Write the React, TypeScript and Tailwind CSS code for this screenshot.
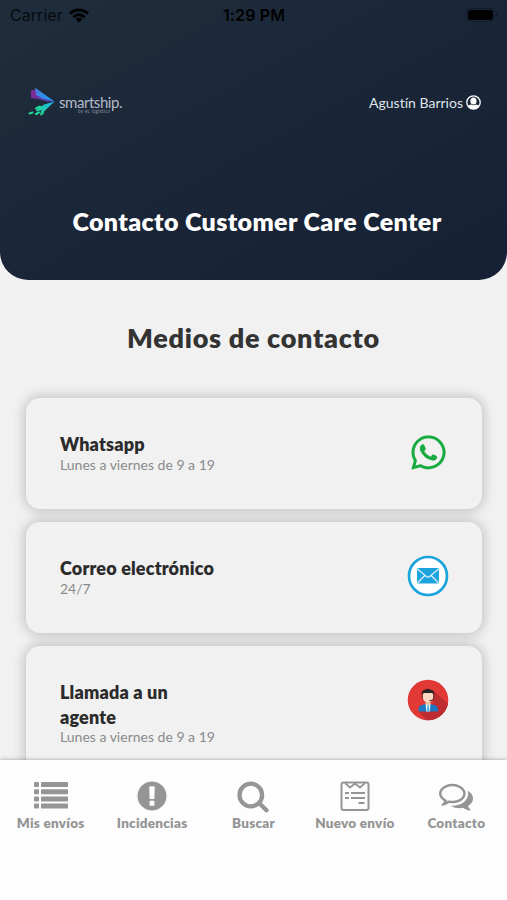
import type { ReactNode } from "react"
import { FaWhatsapp } from "react-icons/fa"

function StatusBar() {
  return (
    <div className="grid h-[30px] grid-cols-3 items-center pr-[10px] pl-[10px] font-['Inter'] text-black">
      <div className="flex items-center gap-[6px]">
        <span className="text-[16px] tracking-[0.05px] opacity-75">Carrier</span>
        <svg className="h-[15px] w-5" viewBox="0 0 20 15" fill="none" stroke="currentColor" strokeWidth="2.900">
          <path d="M1 5.700a12.800 12.800 0 0 1 18 0" />
          <path d="M4.300 9.200a8 8 0 0 1 11.400 0" />
          <path d="M10 14.500l-3.300-3.300a4.700 4.700 0 0 1 6.600 0z" fill="currentColor" stroke="none" />
        </svg>
      </div>
      <span className="pl-px text-center text-[16px] font-semibold tracking-[0.15px] whitespace-nowrap">1:29 PM</span>
      <div className="flex items-center justify-end gap-px pb-px">
        <div className="rounded-[4px] border border-black/30 p-px">
          <div className="h-[10px] w-[25px] rounded-[3px] bg-black" />
        </div>
        <div className="h-1 w-px rounded-r bg-black/40" />
      </div>
    </div>
  )
}

function Logo() {
  return (
    <div className="flex items-start">
      <svg className="h-[32px] w-[32px]" viewBox="0 0 32 32">
        <defs>
          <linearGradient id="wing" x1="0" y1="0" x2="1" y2="1">
            <stop offset="0" stopColor="#4b78d8" />
            <stop offset="1" stopColor="#1b9ff0" />
          </linearGradient>
          <linearGradient id="trail" x1="0" y1="1" x2="1" y2="0">
            <stop offset="0" stopColor="#1fe08f" />
            <stop offset="1" stopColor="#22a8ee" />
          </linearGradient>
        </defs>
        <path d="M4 4l5 0 10 10-15-2z" fill="#7a2c96" />
        <path d="M8 1.500L27.500 15.500 19 14.500 9 9z" fill="url(#wing)" />
        <path d="M4 10.500l16 3 7.500 2H20z" fill="#5a3fb4" />
        <path d="M27.500 15.500L16 26.500l-3 .5 2-3-5 1.500-1-1.500 8-5.500z" fill="url(#trail)" />
        <path d="M9 22.500l4-2M2.500 27.500l3-1M9 28l3-1.500M14 28.500l2-1.500" stroke="#1fd99a" strokeWidth="2" strokeLinecap="round" />
      </svg>
      <div className="flex flex-col pt-[8px]">
        <span className="h-[14px] text-[15px] leading-[16px] font-normal tracking-[-0.45px] whitespace-nowrap text-[#b3bac6]">smartship.</span>
        <span className="pl-[19px] text-[5px] leading-[6px] tracking-[0.1px] whitespace-nowrap text-[#7f8998]">by ec logistica</span>
      </div>
    </div>
  )
}

function MailIcon() {
  return (
    <svg className="size-[42px]" viewBox="0 0 42 42">
      <circle cx="21" cy="21" r="19" fill="#fff" stroke="#1ea4dc" strokeWidth="2.700" />
      <rect x="10" y="13" width="22" height="15.500" rx="1.500" fill="#1ea4dc" />
      <path d="M10.500 14l8.500 7.300q2 1.700 4 0l8.500-7.300M10.500 28l7.300-7.500M31.500 28l-7.300-7.500" fill="none" stroke="#dff2fb" strokeWidth="1.200" />
    </svg>
  )
}

function AgentIcon() {
  return (
    <svg className="size-[42px]" viewBox="0 0 42 42">
      <defs>
        <clipPath id="agent">
          <circle cx="21" cy="21" r="20.300" />
        </clipPath>
      </defs>
      <g clipPath="url(#agent)">
        <rect width="42" height="42" fill="#e23836" />
        <path d="M26 11l16 15v16H20l-8-9 14-6z" fill="#bd2c2e" />
      </g>
      <path d="M11.500 32.500v-2q0-4 4-4.800l3.500-.8h4l3.500.8q4.500.8 4.500 4.800v2z" fill="#1d78bd" />
      <path d="M18.500 24.500h5l-.7 8h-3.500z" fill="#e9f3f8" />
      <path d="M20.500 26h1.200l.6 6.500h-2.300z" fill="#49abd9" />
      <path d="M18.500 20h5v4.500l-2.500 2-2.500-2z" fill="#edbd9f" />
      <ellipse cx="21" cy="17.500" rx="5.300" ry="6" fill="#fad8c4" />
      <path d="M14.700 16.500q-1-5 3.500-6 2.500-1.500 5 0 5 1 4 6l-1.500-2.500h-9.500z" fill="#2b2426" />
      <path d="M15.300 16.500v3M26.700 16.500v3q-1 2-4.500 2.300" fill="none" stroke="#4a3434" strokeWidth="1" />
    </svg>
  )
}

const contacts: { title: string; hours: string; icon: ReactNode }[] = [
  {
    title: "Whatsapp",
    hours: "Lunes a viernes de 9 a 19",
    icon: <FaWhatsapp className="size-[39px] stroke-[#16ab3f] stroke-2 text-[#16ab3f]" />,
  },
  { title: "Correo electrónico", hours: "24/7", icon: <MailIcon /> },
  { title: "Llamada a un agente", hours: "Lunes a viernes de 9 a 19", icon: <AgentIcon /> },
]

const tabs: { label: string; icon: ReactNode }[] = [
  {
    label: "Mis envíos",
    icon: (
      <svg className="h-[36px] w-[34px]" viewBox="0 0 34 36" fill="currentColor">
        {[4, 11.200, 18.400, 25.600].map((y) => (
          <g key={y}>
            <rect x="0" y={y} width="5" height="5" rx="1" />
            <rect x="7" y={y} width="27" height="5" rx="0.700" />
          </g>
        ))}
      </svg>
    ),
  },
  {
    label: "Incidencias",
    icon: (
      <svg className="size-[34px]" viewBox="0 0 1792 1792" fill="currentColor">
        <path d="M896 128q209 0 385.500 103t279.500 279.500 103 385.500-103 385.500-279.500 279.500-385.500 103-385.500-103-279.500-279.500-103-385.500 103-385.500 279.500-279.500 385.500-103zm128 1247v-190q0-14-9-23.500t-22-9.500h-192q-13 0-23 10t-10 23v190q0 13 10 23t23 10h192q13 0 22-9.500t9-23.500zm-2-344l18-621q0-12-10-18-10-8-24-8h-220q-14 0-24 8-10 6-10 18l17 621q0 10 10 17.500t24 7.500h185q14 0 23.500-7.500t10.500-17.500z" />
      </svg>
    ),
  },
  {
    label: "Buscar",
    icon: (
      <svg className="h-[36px] w-[32px]" viewBox="0 0 32 36" fill="none" stroke="currentColor">
        <circle cx="13.800" cy="17" r="11.300" strokeWidth="4.300" />
        <path d="M22.500 25.500l7 6.800" strokeWidth="4.300" strokeLinecap="round" />
      </svg>
    ),
  },
  {
    label: "Nuevo envío",
    icon: (
      <svg className="h-[36px] w-[30px]" viewBox="0 0 30 36" fill="none" stroke="currentColor" strokeWidth="2">
        <rect x="1.500" y="4.500" width="27" height="27.500" rx="2" />
        <path d="M5 5l5 4.500L15 5.500l5 4L25 5" strokeWidth="1.800" />
        <path d="M5 15h4M11 15h14M5 20h4M11 20h14M18.500 25h6" />
      </svg>
    ),
  },
  {
    label: "Contacto",
    icon: (
      <svg className="size-[34px]" viewBox="0 0 1792 1792" fill="currentColor">
        <path d="M704 384q-153 0-286 52t-211.500 141-78.500 191q0 82 53 158t149 132l97 56-35 84q34-20 62-39l44-31 53 10q78 14 153 14 153 0 286-52t211.500-141 78.500-191-78.500-191-211.500-141-286-52zm0-128q191 0 353.500 68.500t256.500 186.500 94 257-94 257-256.500 186.500-353.500 68.500q-86 0-176-16-124 88-278 128-36 9-86 16h-3q-11 0-20.500-8t-11.500-21q-1-3-1-6.500t.5-6.500 2-6l2.500-5 3.500-5.500 4-5 4.500-5 4-4.500q5-6 23-25t26-29.500 22.500-29 25-38.500 20.500-44q-124-72-195-177t-71-224q0-139 94-257t256.500-186.500 353.500-68.500zm822 1169q10 24 20.500 44t25 38.500 22.500 29 26 29.500 23 25q1 1 4 4.500t4.500 5 4 5 3.500 5.500l2.500 5 2 6 .5 6.500-1 6.500q-3 14-13 22t-22 7q-50-7-86-16-154-40-278-128-90 16-176 16-271 0-472-132 58 4 88 4 161 0 309-45t264-129q125-92 192-212t67-254q0-77-23-152 129 71 204 178t75 230q0 120-71 224.500t-195 176.500z" />
      </svg>
    ),
  },
]

export default function App() {
  return (
    <div className="flex h-[900px] w-[507px] flex-col overflow-hidden bg-[#f1f1f1] font-['Lato',sans-serif]">
      <header className="h-[280px] shrink-0 rounded-b-[28px] bg-linear-to-br from-[#1f2d3c] to-[#152034]">
        <StatusBar />
        <div className="mt-[56px] flex h-8 items-center justify-between pr-[26px] pl-[27px]">
          <Logo />
          <div className="flex items-center gap-[3px] text-[#dfe4ea]">
            <span className="text-[14px] tracking-[0.01px]">Agustín Barrios</span>
            <svg className="size-[15px]" viewBox="0 0 15 15">
              <defs>
                <clipPath id="avatar">
                  <circle cx="7.500" cy="7.500" r="6.500" />
                </clipPath>
              </defs>
              <circle cx="7.500" cy="7.500" r="6.700" fill="none" stroke="#fff" strokeWidth="1.300" />
              <g clipPath="url(#avatar)" fill="#fff">
                <ellipse cx="7.500" cy="6" rx="3.100" ry="3.600" />
                <path d="M1 15v-2.500q0-2.500 4-3.100 2.500 1.500 5 0 4 .6 4 3.100V15z" />
              </g>
            </svg>
          </div>
        </div>
        <h1 className="mt-[87px] pl-[7px] text-center text-[25px] leading-8 font-extrabold tracking-[0.37px] whitespace-nowrap text-white">
          Contacto Customer Care Center
        </h1>
      </header>

      <main className="min-h-0 flex-1 overflow-hidden">
        <h2 className="mt-[40px] text-center text-[27px] leading-9 font-extrabold tracking-[0.7px] text-[#333]">Medios de contacto</h2>
        <div className="mt-[42px] flex flex-col gap-[13px] pr-[25px] pl-[26px]">
          {contacts.map((item) => (
            <div
              key={item.title}
              className="flex min-h-[111px] items-start justify-between rounded-[14px] bg-[#f1f1f1] pt-[34px] pr-[33px] pb-[27px] pl-[34px] shadow-[0_0_12px_2px_rgba(0,0,0,0.2)]"
            >
              <div className="w-[165px]">
                <h3 className="text-[18px] leading-[24.500px] font-extrabold tracking-[0.17px] text-[#2b2b2b]">{item.title}</h3>
                <p className="-mt-px text-[14px] leading-[18px] whitespace-nowrap text-[#8a8a8a]">{item.hours}</p>
              </div>
              <div className="-mt-px flex size-[42px] items-center justify-center">{item.icon}</div>
            </div>
          ))}
        </div>
      </main>

      {/* Bottom tab bar */}
      <nav className="z-10 grid h-[140px] shrink-0 grid-cols-5 items-start bg-[#fdfdfd] pt-[18px] text-[#959595] shadow-[0_0_4px_rgba(0,0,0,0.35)]">
        {tabs.map((tab) => (
          <div key={tab.label} className="flex flex-col items-center">
            <div className="flex h-9 items-center">{tab.icon}</div>
            <span className="text-[13.500px] leading-[18px] font-extrabold tracking-[0.25px] whitespace-nowrap">{tab.label}</span>
          </div>
        ))}
      </nav>
    </div>
  )
}
